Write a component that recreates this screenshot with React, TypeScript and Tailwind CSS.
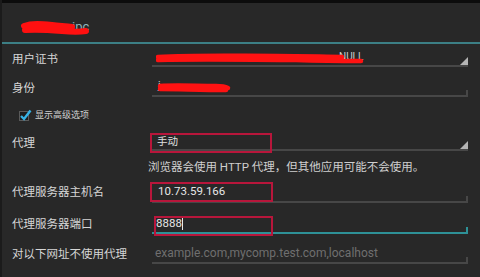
import React from "react";

const font = { fontFamily: 'Roboto, "Noto Sans CJK SC", sans-serif' };

// small end tick of a holo edit-text underline
const Tick = ({ teal }: { teal?: boolean }) => (
  <div
    className={`absolute right-0 bottom-0 w-[2px] h-[5px] ${
      teal ? "bg-[#2e9197]" : "bg-[#474747]"
    }`}
  />
);

// spinner corner triangle
const Corner = () => (
  <svg className="absolute right-0 bottom-0" width="8" height="8" viewBox="0 0 8 8">
    <polygon points="8,0 8,8 0,8" fill="#b4b4b4" />
  </svg>
);

const Label = ({ children }: { children: React.ReactNode }) => (
  <div className="w-[150px] pl-[10px] text-[11.5px] text-[#d6d6d6] leading-4 shrink-0">
    {children}
  </div>
);

export default function App() {
  return (
    <div
      className="w-[480px] h-[277px] bg-[#282828] overflow-hidden border-l-2 border-[#1b1b1b] flex flex-col"
      style={font}
    >
      <div className="h-[3px] bg-[#0c0c0c] shrink-0" />

      {/* dialog title */}
      <div className="h-[39px] flex items-start pt-[15px] pl-[18px] shrink-0">
        <div className="relative h-[18px] w-[72px]">
          <span className="absolute left-[52px] top-[1px] text-[13px] leading-4 text-[#8fb3bb]">ipc</span>
          <svg className="absolute left-0 top-0" width="72" height="18" viewBox="0 0 72 18">
            <path
              d="M4 8 C12 5 22 6 32 7 C40 8 46 8 52 9 M5 12 C18 11 30 12 42 13 C52 14 60 14 66 13"
              stroke="#ff1010"
              strokeWidth="6"
              strokeLinecap="round"
              fill="none"
            />
          </svg>
        </div>
      </div>
      <div className="h-[2px] bg-[#3c7f85] shrink-0" />

      {/* 用户证书 */}
      <div className="flex items-center h-[29px] shrink-0">
        <Label>用户证书</Label>
        <div className="relative flex-1 mr-[12px] h-[17px] border-b-2 border-[#474747] flex items-center">
          <div className="relative ml-[4px] h-[14px] w-[210px]">
            <span className="absolute left-[183px] top-[-2px] text-[10px] text-[#cfcfcf]">NULL</span>
            <svg className="absolute left-0 top-0" width="210" height="14" viewBox="0 0 210 14">
              <path
                d="M2 6 C40 4 80 5 120 5 C150 5 170 6 186 6 M2 9 C50 8 100 9 140 9 C170 10 190 10 205 10"
                stroke="#ff1212"
                strokeWidth="4.5"
                strokeLinecap="round"
                fill="none"
              />
            </svg>
          </div>
          <Corner />
        </div>
      </div>

      {/* 身份 */}
      <div className="flex items-center h-[30px] shrink-0">
        <Label>身份</Label>
        <div className="relative flex-1 mr-[12px] h-[17px] border-b-2 border-[#474747] flex items-center">
          <div className="relative ml-[4px] h-[14px] w-[76px]">
            <span className="absolute left-[2px] top-[-2px] text-[11px] text-[#cfcfcf]">j</span>
            <svg className="absolute left-0 top-0" width="76" height="14" viewBox="0 0 76 14">
              <path
                d="M4 6 C20 5 40 6 60 6 C66 6 70 7 72 8 M4 9 C24 9 44 10 70 10"
                stroke="#ff1212"
                strokeWidth="4.5"
                strokeLinecap="round"
                fill="none"
              />
            </svg>
          </div>
          <Tick />
        </div>
      </div>

      {/* 显示高级选项 */}
      <div className="flex items-center h-[24px] pl-[16px] gap-[3px] shrink-0">
        <svg width="14" height="14" viewBox="0 0 14 14">
          <rect x="1.5" y="3.5" width="9" height="9" fill="#1d1d1d" stroke="#5a5a5a" strokeWidth="1" />
          <path d="M3 8 L6 11 L12.5 2.5" stroke="#36b3e6" strokeWidth="2.4" fill="none" />
        </svg>
        <span className="text-[9px] text-[#d0d0d0] leading-3">显示高级选项</span>
      </div>

      {/* 代理 */}
      <div className="flex items-center h-[31px] shrink-0">
        <Label>代理</Label>
        <div className="relative flex-1 mr-[12px] h-[16px] border-b-2 border-[#474747] flex items-center">
          <span className="ml-[5px] text-[10.5px] text-[#e0e0e0] leading-3">手动</span>
          <div className="absolute left-[-2px] top-[-2px] w-[122px] h-[20px] border-2 border-[#b8163b]" />
          <Corner />
        </div>
      </div>

      {/* hint */}
      <div className="flex items-center h-[17px] shrink-0">
        <span className="ml-[146px] text-[11.5px] text-[#cfcfcf] leading-4 whitespace-nowrap">
          浏览器会使用 HTTP 代理，但其他应用可能不会使用。
        </span>
      </div>

      {/* 主机名 */}
      <div className="flex items-center h-[34px] shrink-0">
        <Label>代理服务器主机名</Label>
        <div className="relative flex-1 mr-[12px] h-[21px] border-b-2 border-[#474747] flex items-center">
          <span className="ml-[6px] text-[11.5px] text-[#e6e6e6] leading-4">10.73.59.166</span>
          <div className="absolute left-[-2px] top-0 w-[123px] h-[20px] border-2 border-[#b8163b]" />
          <Tick />
        </div>
      </div>

      {/* 端口 */}
      <div className="flex items-center h-[30px] shrink-0">
        <Label>代理服务器端口</Label>
        <div className="relative flex-1 mr-[12px] h-[20px] border-b-2 border-[#2e9197] flex items-center">
          <span className="ml-[4px] text-[11.5px] text-[#e6e6e6] leading-4">8888</span>
          <span className="w-[1px] h-[13px] bg-[#e6e6e6]" />
          <div className="absolute left-[2px] top-[2px] w-[119px] h-[20px] border-2 border-[#b8163b]" />
          <Tick teal />
        </div>
      </div>

      {/* 不使用代理 */}
      <div className="flex items-center h-[29px] shrink-0">
        <Label>对以下网址不使用代理</Label>
        <div className="relative flex-1 mr-[12px] h-[20px] border-b-2 border-[#474747] flex items-center">
          <span className="ml-[3px] text-[12px] text-[#6f6f6f] leading-4 whitespace-nowrap">
            example.com,mycomp.test.com,localhost
          </span>
          <Tick />
        </div>
      </div>
    </div>
  );
}
